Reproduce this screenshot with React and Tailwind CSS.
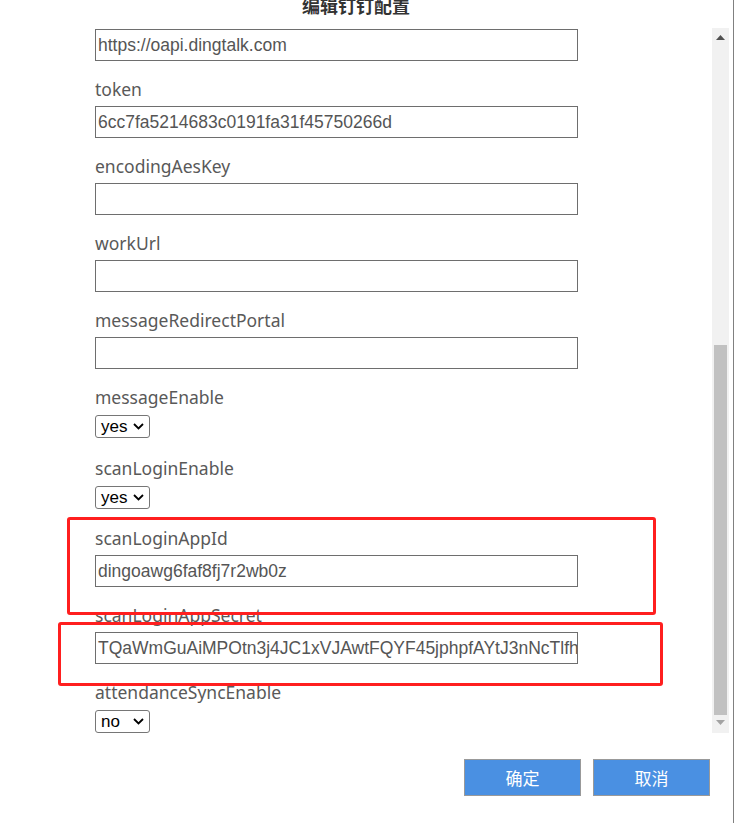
import React from 'react';

const labelFont = { fontFamily: '"Noto Sans", "Noto Sans CJK SC", sans-serif' };

const Field = ({ label, value = '', mb = 'mb-[16px]' }) => (
    <div className={mb}>
        <div className="h-[24px] leading-[24px] text-[17.5px] text-[#595959]" style={labelFont}>{label}</div>
        <div className="mt-[5px] w-[483px] h-[32px] border border-[#6e6e6e] pl-[2px] overflow-hidden whitespace-nowrap leading-[30px] text-[17.5px] text-[#555] font-['Liberation_Sans',sans-serif]">
            {value}
        </div>
    </div>
);

const SelectField = ({ label, value, mb = 'mb-[18px]' }) => (
    <div className={mb}>
        <div className="h-[24px] leading-[24px] text-[17.5px] text-[#595959]" style={labelFont}>{label}</div>
        <div className="mt-[6px] w-[55px] h-[23px] border border-[#767676] rounded-[3px] flex items-center pl-[5px] pr-[4px] justify-between text-[17px] text-black font-['Liberation_Sans',sans-serif]">
            <span className="leading-none">{value}</span>
            <svg width="11" height="7" viewBox="0 0 11 7" className="mr-[1px]">
                <path d="M1 1 L5.5 5.5 L10 1" fill="none" stroke="#000" strokeWidth="1.8" />
            </svg>
        </div>
    </div>
);

const Scrollbar = () => (
    <div className="mt-[28px] mr-[4px] w-[17px] h-[705px] bg-[#f1f1f1] flex flex-col items-center">
        <svg width="9" height="5" viewBox="0 0 9 5" className="mt-[7px]">
            <path d="M0 5 L4.5 0 L9 5 Z" fill="#505050" />
        </svg>
        <div className="mt-[305px] w-[13px] h-[370px] bg-[#c1c1c1]" />
        <svg width="9" height="5" viewBox="0 0 9 5" className="mt-[5px]">
            <path d="M0 0 L4.5 5 L9 0 Z" fill="#a3a3a3" />
        </svg>
    </div>
);

export default function App() {
    return (
        <div className="relative w-[734px] h-[823px] bg-white border-r border-[#808080] overflow-hidden">
            <div className="flex h-[740px]">
                <div className="flex-1 overflow-hidden">
                    <div className="mt-[-7px] h-[24px] leading-[24px] text-center text-[18px] font-bold text-[#333] font-['Noto_Sans_CJK_SC',sans-serif]">
                        编辑钉钉配置
                    </div>
                    <div className="pl-[95px] pt-[12px]">
                        <div className="mb-[16px] w-[483px] h-[32px] border border-[#6e6e6e] pl-[2px] leading-[30px] text-[17.5px] text-[#555] font-['Liberation_Sans',sans-serif]">
                            https://oapi.dingtalk.com
                        </div>
                        <Field label="token" value="6cc7fa5214683c0191fa31f45750266d" />
                        <Field label="encodingAesKey" />
                        <Field label="workUrl" />
                        <Field label="messageRedirectPortal" />
                        <SelectField label="messageEnable" value="yes" />
                        <SelectField label="scanLoginEnable" value="yes" mb="mb-[17px]" />
                        <Field label="scanLoginAppId" value="dingoawg6faf8fj7r2wb0z" mb="mb-[16px]" />
                        <Field label="scanLoginAppSecret" value="TQaWmGuAiMPOtn3j4JC1xVJAwtFQYF45jphpfAYtJ3nNcTlfhXyZ" mb="mb-[16px]" />
                        <SelectField label="attendanceSyncEnable" value="no" />
                    </div>
                </div>
                <Scrollbar />
            </div>

            <div className="flex justify-end gap-[12px] pr-[23px] mt-[19px]">
                <button className="w-[117px] h-[37px] bg-[#4a90e2] border border-[#999] text-white text-[17px] font-['Noto_Sans_CJK_SC',sans-serif]">确定</button>
                <button className="w-[117px] h-[37px] bg-[#4a90e2] border border-[#999] text-white text-[17px] font-['Noto_Sans_CJK_SC',sans-serif]">取消</button>
            </div>

            {/* annotation boxes */}
            <div className="absolute left-[67px] top-[517px] w-[589px] h-[98px] border-[3px] border-[#ff1f1f] rounded-[3px]" />
            <div className="absolute left-[58px] top-[622px] w-[605px] h-[64px] border-[3px] border-[#ff1f1f] rounded-[3px]" />
        </div>
    );
}
